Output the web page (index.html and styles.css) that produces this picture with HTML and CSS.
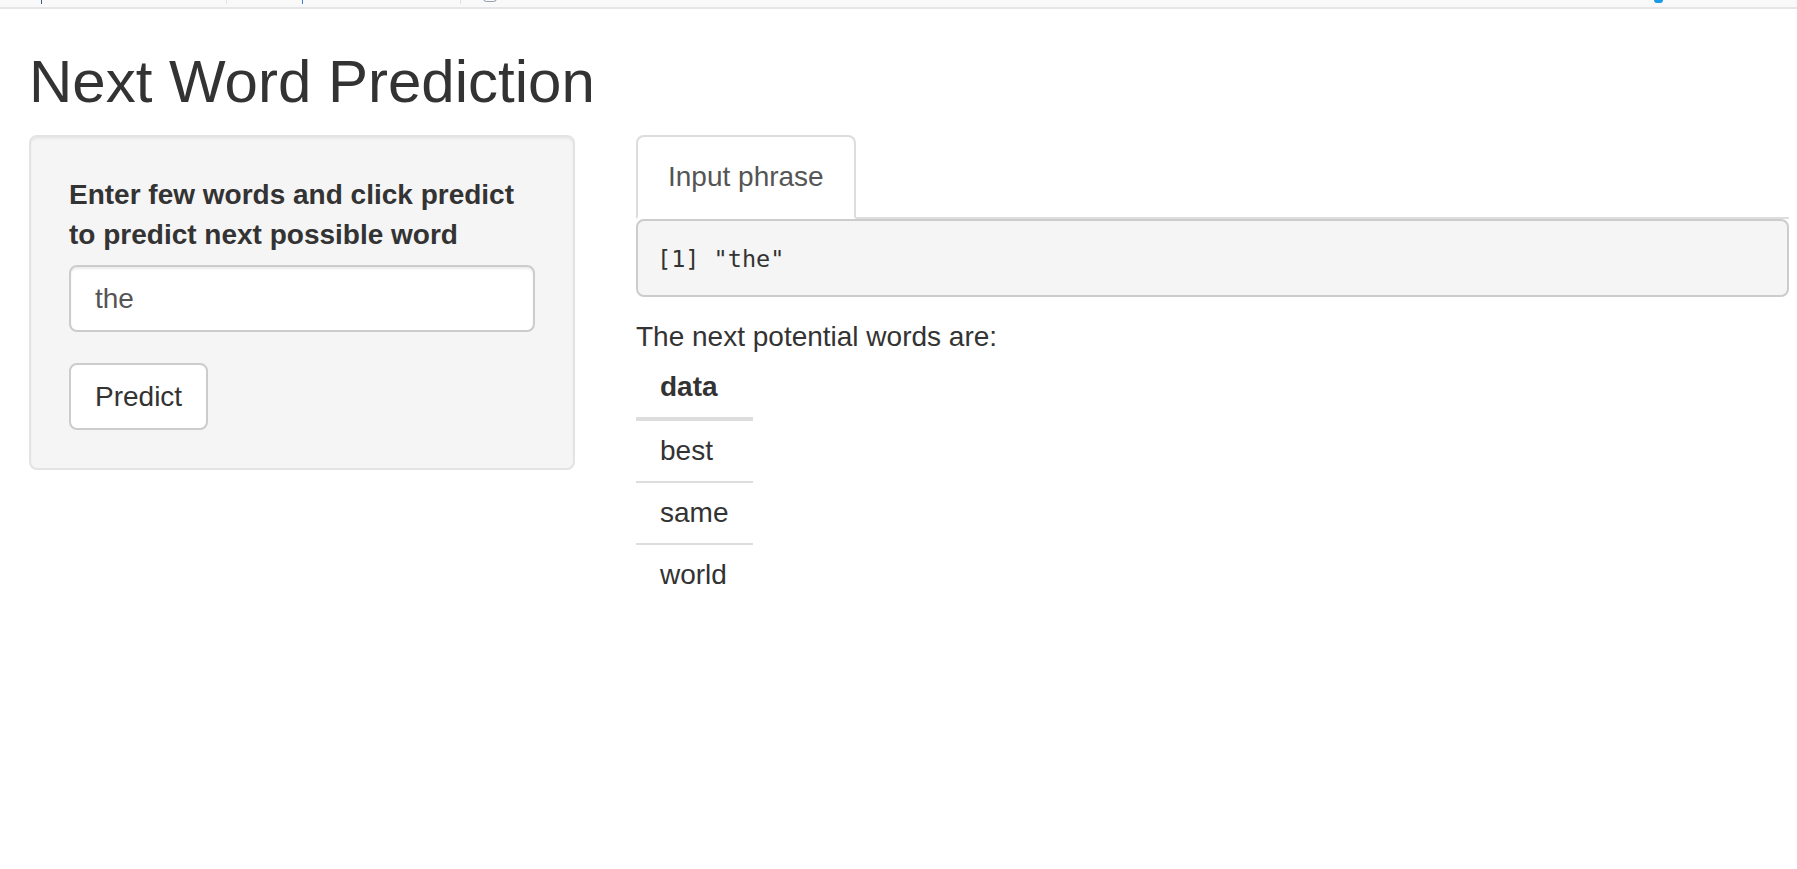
FILE: index.html
```html
<!DOCTYPE html>
<html lang="en">
<head>
<meta charset="utf-8">
<title>Next Word Prediction</title>
<link rel="stylesheet" href="styles.css">
</head>
<body>
<div class="chrome-strip">
  <span class="mark mark-a"></span>
  <span class="mark mark-b"></span>
  <span class="mark mark-c"></span>
  <span class="mark mark-d"></span>
  <span class="mark mark-e"></span>
  <span class="mark mark-f"></span>
</div>
<div class="container">
  <h2 class="title">Next Word Prediction</h2>
  <div class="layout">
    <div class="sidebar">
      <form class="well">
        <label class="control-label" for="phrase">Enter few words and click predict to predict next possible word</label>
        <input id="phrase" class="form-control" type="text" value="the">
        <button type="button" class="btn">Predict</button>
      </form>
    </div>
    <div class="main">
      <ul class="nav-tabs">
        <li class="tab active">Input phrase</li>
      </ul>
      <div class="tab-content">
        <pre class="output">[1] "the"</pre>
        <div class="caption">The next potential words are:</div>
        <table class="words">
          <thead>
            <tr><th>data</th></tr>
          </thead>
          <tbody>
            <tr><td>best</td></tr>
            <tr><td>same</td></tr>
            <tr><td>world</td></tr>
          </tbody>
        </table>
      </div>
    </div>
  </div>
</div>
</body>
</html>
```

FILE: styles.css
```css
* {
  box-sizing: border-box;
}

html, body {
  margin: 0;
  padding: 0;
  background: #ffffff;
}

body {
  font-family: "Liberation Sans", Arial, Helvetica, sans-serif;
  font-size: 28px;
  line-height: 40px;
  color: #333333;
}

.chrome-strip {
  position: relative;
  height: 9px;
  background: #f9f9fa;
  border-bottom: 2px solid #e6e6ea;
}

.mark {
  position: absolute;
  top: 0;
  width: 1px;
  height: 4px;
}

.mark-a { left: 41px; background: #3a5a9a; }
.mark-b { left: 226px; background: #e2e2e2; }
.mark-c { left: 302px; background: #3f7fc6; }
.mark-d { left: 460px; background: #e0e0e0; }
.mark-e {
  left: 483px;
  width: 14px;
  height: 4px;
  top: -2px;
  border: 1px solid #9aa0b0;
  border-radius: 0 0 7px 7px;
  border-top: none;
  background: transparent;
}
.mark-f { left: 1654px; width: 9px; height: 3px; border-radius: 0 0 4px 4px; background: #1a9be6; }

.container {
  padding: 0 8px 0 29px;
}

.title {
  margin: 40px 0 20px;
  font-size: 60px;
  font-weight: 500;
  line-height: 66px;
  color: #333333;
}

.layout {
  display: flex;
  align-items: flex-start;
  gap: 61px;
}

.sidebar {
  width: 546px;
  flex: none;
}

.well {
  display: flex;
  flex-direction: column;
  align-items: flex-start;
  margin: 0;
  padding: 38px;
  background: #f5f5f5;
  border: 2px solid #e3e3e3;
  border-radius: 8px;
  box-shadow: inset 0 2px 2px rgba(0, 0, 0, 0.05);
}

.control-label {
  display: block;
  font-weight: bold;
  margin-bottom: 10px;
}

.form-control {
  display: block;
  width: 100%;
  height: 67px;
  padding: 11px 24px;
  font-family: inherit;
  font-size: 28px;
  line-height: 40px;
  color: #555555;
  background: #ffffff;
  border: 2px solid #cccccc;
  border-radius: 8px;
  box-shadow: inset 0 2px 2px rgba(0, 0, 0, 0.075);
  outline: none;
}

.btn {
  margin-top: 31px;
  height: 67px;
  padding: 11px 24px;
  font-family: inherit;
  font-size: 28px;
  line-height: 40px;
  color: #333333;
  background: #ffffff;
  border: 2px solid #cccccc;
  border-radius: 8px;
}

.main {
  flex: 1;
  min-width: 0;
}

.nav-tabs {
  display: flex;
  margin: 0;
  padding: 0;
  list-style: none;
  border-bottom: 2px solid #dddddd;
}

.tab {
  margin-bottom: -2px;
  margin-right: 4px;
  padding: 20px 30px;
  line-height: 40px;
  color: #555555;
  border: 2px solid transparent;
  border-radius: 8px 8px 0 0;
}

.tab.active {
  background: #ffffff;
  border-color: #dddddd #dddddd transparent;
}

.output {
  margin: 0 0 20px;
  padding: 19px 19px 17px;
  font-family: "DejaVu Sans Mono", "Liberation Mono", monospace;
  font-size: 23.5px;
  line-height: 38px;
  color: #333333;
  background: #f5f5f5;
  border: 2px solid #cccccc;
  border-radius: 8px;
  white-space: pre;
}

.caption {
  line-height: 40px;
}

.words {
  border-collapse: separate;
  border-spacing: 0;
}

.words th,
.words td {
  padding: 10px 25px 10px 24px;
  text-align: left;
  line-height: 40px;
}

.words th {
  font-weight: bold;
  border-bottom: 4px solid #dddddd;
}

.words td {
  border-top: 2px solid #dddddd;
}

.words tbody tr:first-child td {
  border-top: none;
}
```
